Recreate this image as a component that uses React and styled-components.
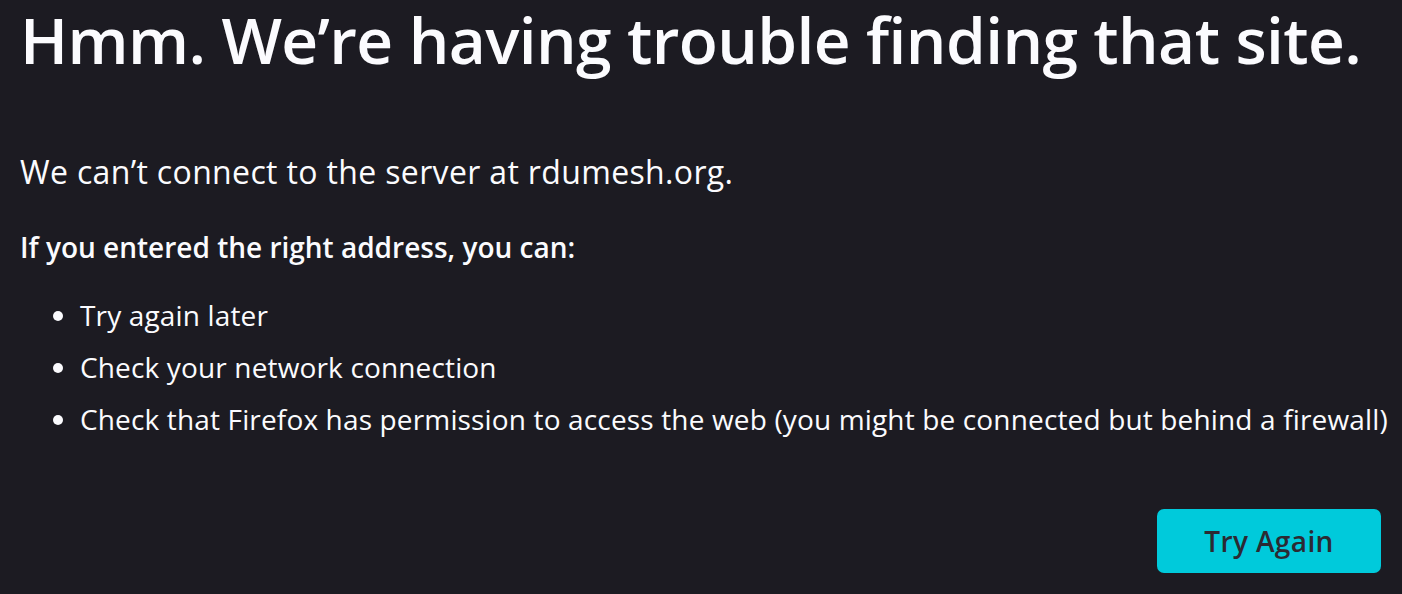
import React from "react";
import styled, { createGlobalStyle } from "styled-components";

const Global = createGlobalStyle`
  html, body { margin: 0; padding: 0; background: #1c1b22; }
  body { font-family: "Open Sans", "Noto Sans", sans-serif; color: #fbfbfe; }
`;

const Page = styled.main`
  min-height: 594px;
  box-sizing: border-box;
  padding: 0 14px 0 20px;
  display: flex;
  flex-direction: column;
`;

const Title = styled.h1`
  margin: -4px 0 0;
  font-size: 64px;
  font-weight: 600;
  font-stretch: 100%;
  line-height: 88px;
  letter-spacing: -0.6px;
  white-space: nowrap;
`;

const Lead = styled.p`
  margin: 66px 0 0;
  font-size: 32px;
  font-weight: 400;
  font-stretch: 100%;
  line-height: 44px;
  letter-spacing: 0.35px;
  white-space: nowrap;
`;

const Sub = styled.p`
  margin: 33px 0 0;
  font-size: 28px;
  font-weight: 600;
  font-stretch: 100%;
  line-height: 40px;
  white-space: nowrap;
`;

const List = styled.ul`
  margin: 22px 0 0;
  padding-left: 60px;
  font-size: 28px;
  font-weight: 400;
  font-stretch: 100%;
  line-height: 52px;
  letter-spacing: 0.15px;
  white-space: nowrap;
`;

const Item = styled.li``;

const Actions = styled.div`
  display: flex;
  justify-content: flex-end;
  margin-top: 64px;
  padding-right: 7px;
`;

const Button = styled.button`
  width: 224px;
  height: 64px;
  border: none;
  border-radius: 7px;
  background: #00cadb;
  color: #2b2a33;
  font-family: "Open Sans", "Noto Sans", sans-serif;
  font-size: 28px;
  font-weight: 600;
  font-stretch: 100%;
  letter-spacing: 0.4px;
  cursor: pointer;
`;

export default function App() {
  return (
    <>
      <Global />
      <Page>
        <Title>Hmm. We’re having trouble finding that site.</Title>
        <Lead>We can’t connect to the server at rdumesh.org.</Lead>
        <Sub>If you entered the right address, you can:</Sub>
        <List>
          <Item>Try again later</Item>
          <Item>Check your network connection</Item>
          <Item>Check that Firefox has permission to access the web (you might be connected but behind a firewall)</Item>
        </List>
        <Actions>
          <Button>Try Again</Button>
        </Actions>
      </Page>
    </>
  );
}
